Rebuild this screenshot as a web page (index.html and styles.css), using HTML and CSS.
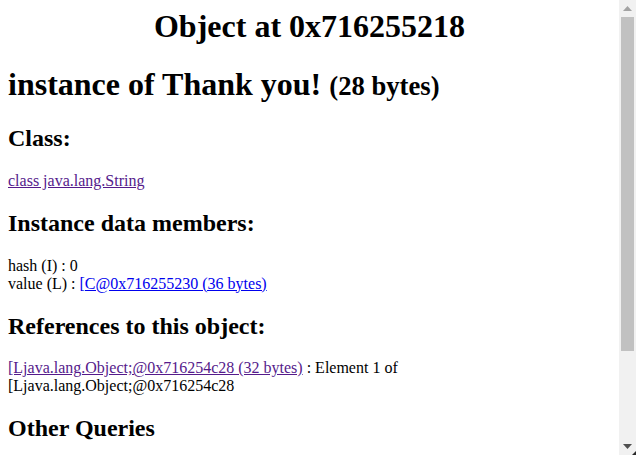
FILE: index.html
```html
<html>
<head>
<title>Object at 0x716255218</title>
<link rel="stylesheet" href="styles.css">
</head>
<body class="window">
<main class="page">
<h1 class="title">Object at 0x716255218</h1>
<h1 class="instance">instance of Thank you! <small class="size">(28 bytes)</small></h1>
<h2 class="section">Class:</h2>
<a class="link visited" href="#class">class java.lang.String</a><br>
<h2 class="section">Instance data members:</h2>
hash (I) : 0<br>
value (L) : <a class="link" href="#value">[C@0x716255230 (36 bytes)</a><br>
<h2 class="section">References to this object:</h2>
<a class="link visited" href="#ref">[Ljava.lang.Object;@0x716254c28 (32 bytes)</a> : Element 1 of [Ljava.lang.Object;@0x716254c28<br>
<h2 class="section">Other Queries</h2>
Reference Chains from Rootset
<ul class="queries">
<li><a class="link" href="#roots">Exclude weak refs</a></li>
<li><a class="link" href="#allroots">Include weak refs</a></li>
</ul>
<a class="link" href="#reachable">Objects reachable from here</a><br>
</main>
<div class="scrollbar" aria-hidden="true">
  <div class="arrow up"><svg width="9" height="5" viewBox="0 0 9 5"><polygon points="0,5 9,5 4.5,0" fill="#a3a3a3"/></svg></div>
  <div class="track"><div class="thumb"></div></div>
  <div class="arrow down"><svg width="9" height="5" viewBox="0 0 9 5"><polygon points="0,0 9,0 4.5,5" fill="#505050"/></svg></div>
  <div class="corner"></div>
</div>
</body>
</html>
```

FILE: styles.css
```css
html {
  background: #ffffff;
  margin: 0;
  height: 455px;
  overflow: hidden;
}
.window {
  margin: 0;
  height: 455px;
  display: flex;
  overflow: hidden;
  font-family: "Liberation Serif", "Times New Roman", serif;
  font-size: 16px;
  color: #000000;
}
.page {
  flex: 1;
  min-width: 0;
  padding: 8px;
  overflow: hidden;
}
.title {
  margin: 0 0 21.44px 0;
  text-align: center;
  font-size: 32px;
  font-weight: bold;
}
.instance {
  margin: 21.44px 0;
  font-size: 32px;
  font-weight: bold;
}
.size {
  font-size: smaller;
}
.section {
  margin: 19.92px 0;
  font-size: 24px;
  font-weight: bold;
}
.link {
  color: #0000ee;
  text-decoration: underline;
}
.link.visited {
  color: #551a8b;
}
.queries {
  margin: 16px 0;
  padding-left: 40px;
}
.scrollbar {
  position: relative;
  width: 17px;
  flex: none;
  background: #f1f1f1;
  display: flex;
  flex-direction: column;
}
.arrow {
  height: 17px;
  display: flex;
  align-items: center;
  justify-content: center;
}
.arrow svg {
  display: block;
}
.track {
  flex: 1;
  padding: 0 2px;
}
.thumb {
  height: 334px;
  background: #c1c1c1;
}
.corner {
  position: absolute;
  right: 0;
  bottom: 0;
  width: 0;
  height: 0;
  border-left: 4px solid transparent;
  border-bottom: 4px solid #2a2a2a;
}
```
